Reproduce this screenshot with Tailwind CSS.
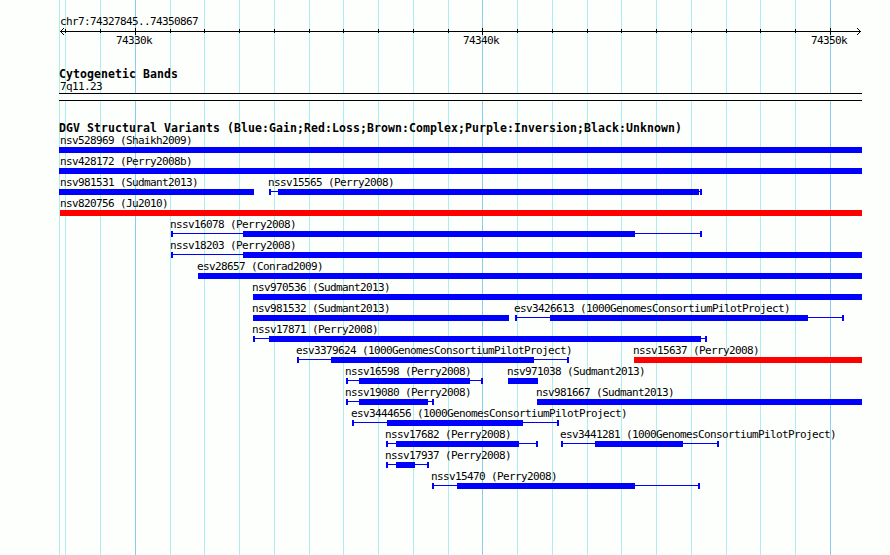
<!DOCTYPE html>
<html lang="en">

<head>
    <meta charset="UTF-8">
    <meta name="viewport" content="width=device-width, initial-scale=1.0">
    <title>chr7:74327845..74350867</title>
    <script src="https://cdn.jsdelivr.net/npm/@tailwindcss/browser@4"></script>
</head>

<body class="bg-[#fdfffd]">
    <div class="relative w-[890px] h-[555px] overflow-hidden text-black text-[11px] leading-[12px] tracking-[-0.622px] font-['DejaVu_Sans_Mono',monospace]">
        <div id="grid" class="absolute inset-0"></div>

        <main class="relative flex flex-col">
            <!-- ruler -->
            <section class="h-[67px] pt-4">
                <h1 class="pl-[60px] h-3">chr7:74327845..74350867</h1>
                <svg id="ruler" class="block ml-[59px]" width="803" height="7" viewBox="59 28 803 7" shape-rendering="crispEdges">
                    <path d="M60 31h801v1H60z" />
                    <path d="M61 30h1v3h-1zM62 29h1v1h-1zM62 33h1v1h-1zM63 28h1v1h-1zM63 34h1v1h-1z" />
                    <path d="M859 30h1v3h-1zM858 29h1v1h-1zM858 33h1v1h-1zM857 28h1v1h-1zM857 34h1v1h-1z" />
                </svg>
                <div class="flex pl-[116px]">
                    <span class="w-[347px]">74330k</span>
                    <span class="w-[348px]">74340k</span>
                    <span>74350k</span>
                </div>
            </section>

            <!-- cytoband -->
            <section class="h-[54px]">
                <h2 class="pl-[59px] h-[14px] leading-[14px] text-[11.5px] tracking-[0.077px] font-bold">Cytogenetic Bands</h2>
                <p class="pl-[60px] h-3">7q11.23</p>
                <div class="ml-[59px] w-[803px] h-2 border-y border-black bg-[#fdfffd]"></div>
            </section>

            <!-- variants -->
            <section>
                <h2 class="pl-[59px] h-[14px] leading-[14px] text-[11.5px] tracking-[0.077px] font-bold whitespace-nowrap">DGV Structural Variants (Blue:Gain;Red:Loss;Brown:Complex;Purple:Inversion;Black:Unknown)</h2>
                <div id="tracks"></div>
            </section>
        </main>
    </div>

    <script>
        const ticks = [65, 100, 135, 170, 204, 239, 274, 309, 343, 378, 413, 448, 482, 517, 552, 587, 621, 656, 691, 726, 760, 795, 830];
        const major = [135, 482, 830];

        // name, start, thick start, thick end, end, loss
        const tracks = [
            [['nsv528969 (Shaikh2009)', 59, 59, 862, 862]],
            [['nsv428172 (Perry2008b)', 59, 59, 862, 862]],
            [['nsv981531 (Sudmant2013)', 59, 59, 254, 254], ['nssv15565 (Perry2008)', 269, 278, 699, 702]],
            [['nsv820756 (Ju2010)', 60, 60, 862, 862, true]],
            [['nssv16078 (Perry2008)', 171, 243, 635, 702]],
            [['nssv18203 (Perry2008)', 171, 243, 862, 862]],
            [['esv28657 (Conrad2009)', 198, 198, 862, 862]],
            [['nsv970536 (Sudmant2013)', 253, 253, 862, 862]],
            [['nsv981532 (Sudmant2013)', 253, 253, 509, 509], ['esv3426613 (1000GenomesConsortiumPilotProject)', 515, 550, 808, 844]],
            [['nssv17871 (Perry2008)', 253, 269, 701, 707]],
            [['esv3379624 (1000GenomesConsortiumPilotProject)', 297, 331, 534, 569], ['nssv15637 (Perry2008)', 634, 634, 862, 862, true]],
            [['nssv16598 (Perry2008)', 346, 359, 470, 483], ['nsv971038 (Sudmant2013)', 508, 508, 538, 538]],
            [['nssv19080 (Perry2008)', 346, 359, 428, 434], ['nsv981667 (Sudmant2013)', 537, 537, 862, 862]],
            [['esv3444656 (1000GenomesConsortiumPilotProject)', 352, 387, 523, 559]],
            [['nssv17682 (Perry2008)', 386, 396, 519, 538], ['esv3441281 (1000GenomesConsortiumPilotProject)', 561, 595, 683, 719]],
            [['nssv17937 (Perry2008)', 386, 396, 415, 429]],
            [['nssv15470 (Perry2008)', 432, 457, 635, 700]],
        ];

        document.getElementById('grid').innerHTML = [59, ...ticks].map(x =>
            `<div class="absolute inset-y-0 w-px ${major.includes(x) ? 'bg-[#87ceeb]' : 'bg-[#afeeee]'}" style="left:${x}px"></div>`
        ).join('');

        document.getElementById('ruler').innerHTML += ticks.map(x =>
            major.includes(x) ? `<path d="M${x} 28h1v7h-1z" />` : `<path d="M${x} 29h1v4h-1z" />`
        ).join('');

        document.getElementById('tracks').innerHTML = tracks.map(row => {
            const items = row.map(([name, start, thickStart, thickEnd, end, loss]) => {
                const color = loss ? 'bg-[#ff0000]' : 'bg-[#0000ff]';
                const box = (cls, from, to) => `<div class="absolute ${cls} ${color}" style="left:${from}px;width:${to - from}px"></div>`;
                let html = `<span class="absolute top-0 whitespace-nowrap" style="left:${Math.max(start - 1, 60)}px">${name}</span>`;
                if (start < thickStart) html += box('top-[12px] h-[6px]', start, start + 2);
                if (thickEnd < end) html += box('top-[12px] h-[6px]', end - 2, end);
                html += box('top-[14px] h-px', start, end);
                html += box('top-[12px] h-[6px]', thickStart, thickEnd);
                return html;
            }).join('');
            return `<div class="relative h-[21px]">${items}</div>`;
        }).join('');
    </script>
</body>

</html>
